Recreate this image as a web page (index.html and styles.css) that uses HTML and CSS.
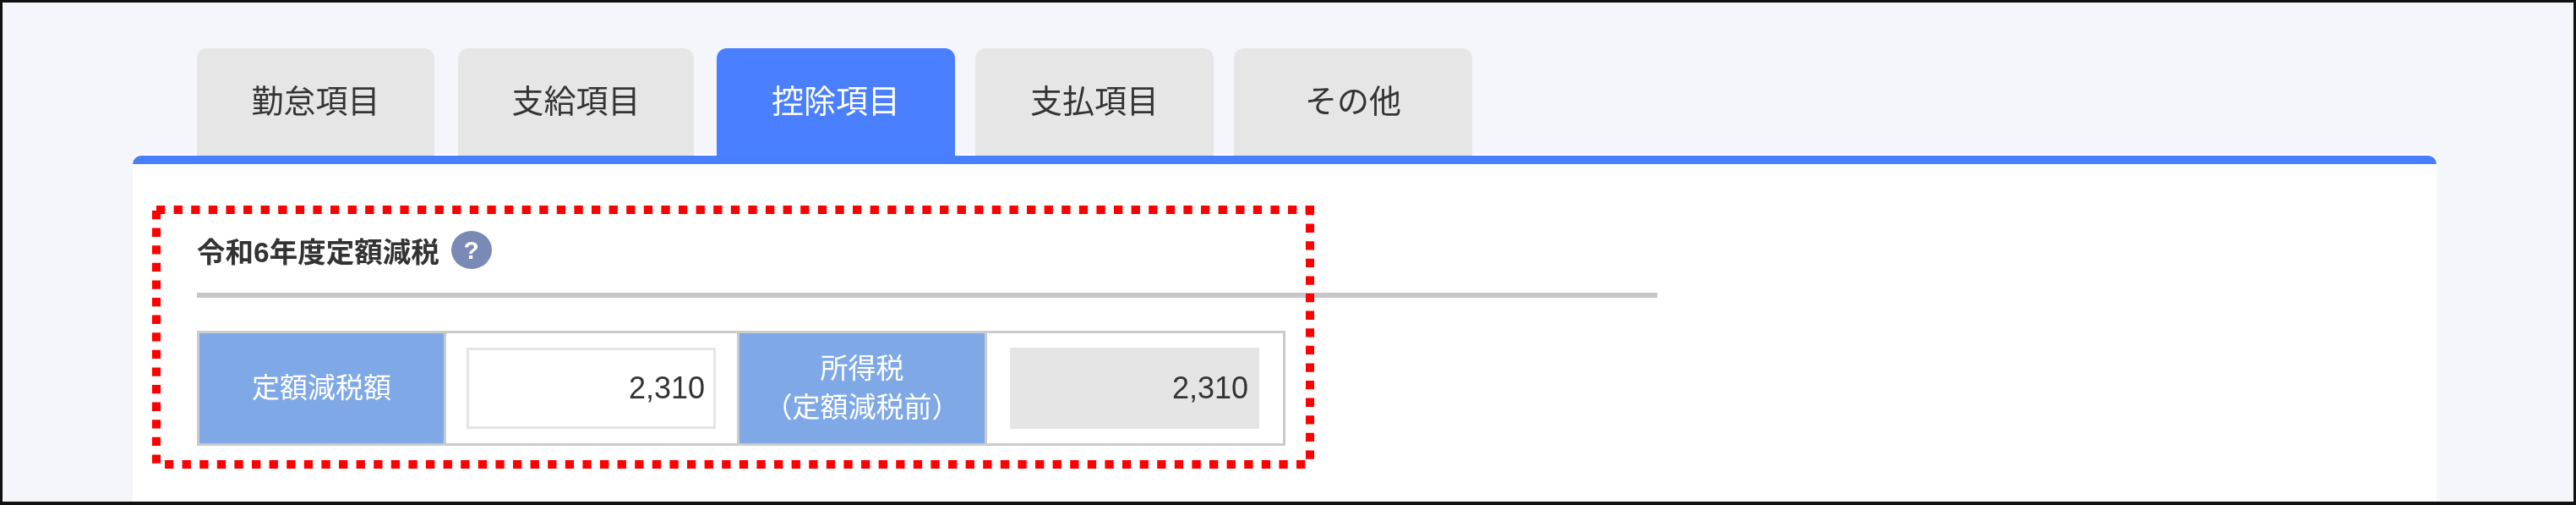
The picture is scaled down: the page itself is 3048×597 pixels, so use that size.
FILE: index.html
```html
<!DOCTYPE html>
<html lang="ja">
<head>
    <meta charset="UTF-8">
    <title>控除項目</title>
    <link rel="stylesheet" href="styles.css">
</head>
<body>
    <div class="frame">
        <div class="tabs">
            <div class="tab">勤怠項目</div>
            <div class="tab">支給項目</div>
            <div class="tab active">控除項目</div>
            <div class="tab">支払項目</div>
            <div class="tab">その他</div>
        </div>

        <div class="panel">
            <div class="section">
                <div class="section-head">
                    <span class="section-title">令和6年度定額減税</span>
                    <span class="help">?</span>
                </div>

                <div class="fields">
                    <div class="field-label">定額減税額</div>
                    <div class="field-value">
                        <div class="amount">2,310</div>
                    </div>
                    <div class="field-label field-label-2">所得税<br>（定額減税前）</div>
                    <div class="field-value field-value-last">
                        <div class="amount amount-readonly">2,310</div>
                    </div>
                </div>
            </div>

            <!-- 赤い点線の囲み -->
            <svg class="highlight" width="1375" height="311">
                <line x1="5" y1="5" x2="1375" y2="5"></line>
                <line x1="1370" y1="1" x2="1370" y2="300"></line>
                <line x1="15" y1="306" x2="1365" y2="306"></line>
                <line x1="5" y1="6" x2="5" y2="306"></line>
            </svg>
        </div>
    </div>
</body>
</html>
```

FILE: styles.css
```css
* {
    box-sizing: border-box;
}
body {
    margin: 0;
    font-family: "Liberation Sans", "Noto Sans CJK JP", sans-serif;
    color: #333;
}
.frame {
    height: 597px;
    padding-top: 54px;
    background: #f4f6fb;
    border: 3px solid #111;
    border-bottom-width: 4px;
    overflow: hidden;
    filter: blur(0.5px);
}
.tabs {
    display: flex;
    margin-left: 230px;
}
.tab {
    position: relative;
    z-index: 1;
    width: 282px;
    height: 127px;
    margin-right: 24px;
    padding-bottom: 8px;
    display: flex;
    align-items: center;
    justify-content: center;
    background: #e6e6e6;
    border-radius: 12px 12px 0 0;
    font-size: 38px;
}
.tab:nth-child(1) {
    width: 281px;
    margin-right: 28px;
}
.tab:nth-child(2) {
    width: 279px;
    margin-right: 27px;
}
.tab.active {
    background: #4a80ff;
    color: #fff;
}
.panel {
    position: relative;
    width: 2726px;
    height: 410px;
    margin-left: 154px;
    padding: 79px 0 0 76px;
    background: #fff;
    border-top: 10px solid #477ffc;
    border-radius: 10px 10px 0 0;
    box-shadow: 0 -2px 0 #fff;
}
.section {
    width: 1728px;
}
.section-head {
    display: flex;
    align-items: center;
    gap: 14px;
    height: 79px;
    padding-bottom: 28px;
    border-bottom: 6px solid #c6c6c6;
}
.section-title {
    font-size: 33.5px;
    font-weight: bold;
}
.help {
    width: 48px;
    height: 45px;
    display: flex;
    align-items: center;
    justify-content: center;
    background: #7b89b6;
    border-radius: 50%;
    color: #fff;
    font-size: 30px;
    font-weight: bold;
}
.fields {
    display: flex;
    width: 1288px;
    height: 136px;
    margin-top: 39px;
    border: 3px solid #cbcbcb;
}
.field-label {
    width: 292px;
    display: flex;
    align-items: center;
    justify-content: center;
    text-align: center;
    background: #7fa9e6;
    border-right: 3px solid #cbcbcb;
    color: #fff;
    font-size: 33px;
    line-height: 46px;
}
.field-label-2 {
    width: 293px;
}
.field-value {
    width: 347px;
    display: flex;
    align-items: center;
    padding: 0 25px 0 24px;
    border-right: 3px solid #cbcbcb;
}
.field-value-last {
    width: 350px;
    padding: 0 28px 0 27px;
    border-right: none;
}
.amount {
    width: 100%;
    height: 96px;
    display: flex;
    align-items: center;
    justify-content: flex-end;
    padding-right: 10px;
    border: 3px solid #e5e5e5;
    font-size: 36px;
}
.amount-readonly {
    padding-right: 10px;
    background: #e5e5e5;
}
.highlight {
    position: absolute;
    left: 23px;
    top: 49px;
}
.highlight line {
    stroke: #f00;
    stroke-width: 10;
    stroke-dasharray: 10.3 10.3;
}
```
